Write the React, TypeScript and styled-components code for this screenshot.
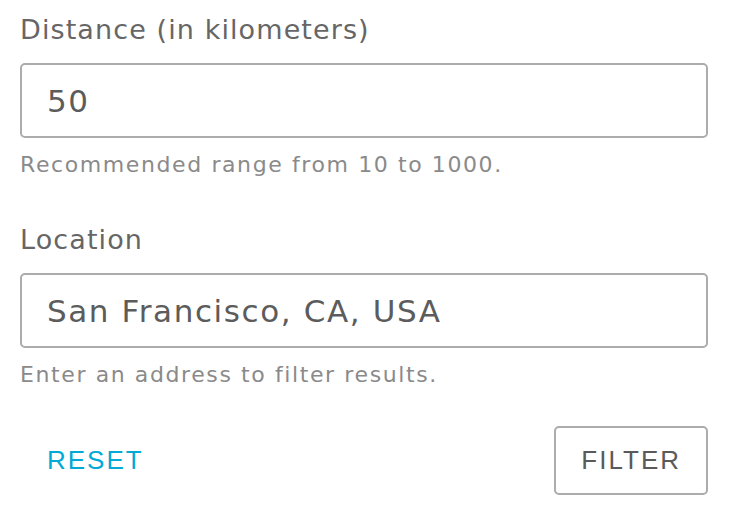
import styled, { createGlobalStyle } from 'styled-components'

const GlobalStyle = createGlobalStyle`
  html, body {
    margin: 0;
    padding: 0;
    background: #fff;
  }
  body {
    font-family: 'DejaVu Sans', 'Open Sans', sans-serif;
  }
`

const Form = styled.form`
  width: 688px;
  padding: 14px 24px 0 20px;
  display: flex;
  flex-direction: column;
`

const Field = styled.div`
  display: flex;
  flex-direction: column;
  margin-bottom: 46px;
`

const Label = styled.label`
  font-size: 27px;
  line-height: 32px;
  letter-spacing: 1.1px;
  color: #666;
  margin-bottom: 17px;
`

const Input = styled.input`
  box-sizing: border-box;
  width: 100%;
  height: 75px;
  border: 2px solid #acacac;
  border-radius: 5px;
  padding: 0 25px;
  font-family: inherit;
  font-size: 31px;
  letter-spacing: 1.6px;
  color: #5c5c5c;
  outline: none;
  background: #fff;
`

const Helper = styled.div`
  margin-top: 14px;
  font-size: 22px;
  line-height: 26px;
  letter-spacing: 1.6px;
  color: #8a8a8a;
`

const Actions = styled.div`
  display: flex;
  justify-content: space-between;
  align-items: center;
  margin-top: -8px;
`

const Button = styled.button<{ $outline?: boolean }>`
  box-sizing: border-box;
  height: 69px;
  padding: 0 ${p => (p.$outline ? '25px' : '27px')};
  font-family: 'Liberation Sans', sans-serif;
  font-size: 26px;
  letter-spacing: 2px;
  background: #fff;
  border: ${p => (p.$outline ? '2px solid #acacac' : 'none')};
  border-radius: 5px;
  color: ${p => (p.$outline ? '#5a5a5a' : '#00a9d6')};
  cursor: pointer;
`

export default function App() {
  return (
    <>
      <GlobalStyle />
      <Form onSubmit={e => e.preventDefault()}>
        <Field>
          <Label htmlFor='distance'>Distance (in kilometers)</Label>
          <Input id='distance' defaultValue='50' />
          <Helper>Recommended range from 10 to 1000.</Helper>
        </Field>
        <Field>
          <Label htmlFor='location'>Location</Label>
          <Input id='location' defaultValue='San Francisco, CA, USA' />
          <Helper>Enter an address to filter results.</Helper>
        </Field>
        <Actions>
          <Button type='reset'>RESET</Button>
          <Button type='submit' $outline>
            FILTER
          </Button>
        </Actions>
      </Form>
    </>
  )
}
